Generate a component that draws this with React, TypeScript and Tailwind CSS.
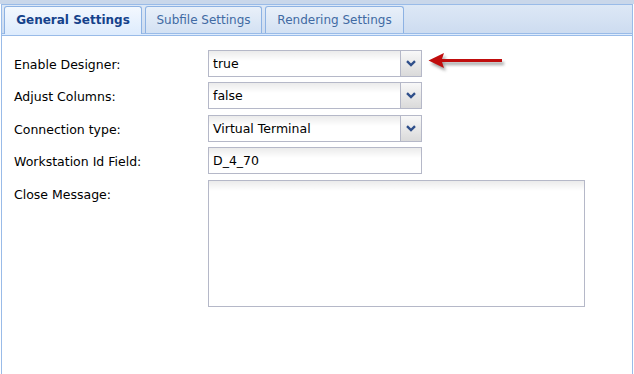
import React from "react";

const FONT = { fontFamily: '"DejaVu Sans", Verdana, sans-serif' };

function Chevron() {
  return (
    <svg width="10" height="7" viewBox="0 0 10 7" className="block">
      <polyline points="1,1.2 5,5 9,1.2" fill="none" stroke="#2f4f8a" strokeWidth="2.4" strokeLinejoin="miter" />
    </svg>
  );
}

function Combo({ value }: { value: string }) {
  return (
    <div className="flex h-[27px] w-[214px] border border-[#b5b8c8] bg-white">
      <div className="flex flex-1 items-center bg-linear-to-b from-[#ebebeb] via-white via-[40%] to-white pl-[4px] pt-[2px] text-[12.5px] text-black">
        {value}
      </div>
      <div className="flex w-[21px] items-center justify-center border-l border-[#b5b8c8] bg-linear-to-b from-[#f8f8f8] to-[#dadada]">
        <Chevron />
      </div>
    </div>
  );
}

function TextField({ value }: { value: string }) {
  return (
    <div className="flex h-[27px] w-[214px] items-center border border-[#b5b8c8] bg-linear-to-b from-[#ebebeb] via-white via-[40%] to-white pl-[4px] pt-[2px] text-[12.5px] text-black">
      {value}
    </div>
  );
}

function Label({ children }: { children: React.ReactNode }) {
  return <div className="w-[194px] pt-[1px] text-[12.5px] leading-[17px] text-black">{children}</div>;
}

export default function App() {
  return (
    <div className="relative h-[374px] w-[634px] overflow-hidden bg-white" style={FONT}>
      <div className="h-[4px] bg-[#c9d7ea]" />
      <div className="mx-[1px] flex h-[370px] flex-col border-x border-[#99bbe8]">
        {/* tab strip */}
        <div className="flex h-[29px] items-end gap-[3px] border-t border-[#99bbe8] bg-linear-to-b from-[#dde8f6] to-[#cddcf0] pl-[2px]">
          <div className="relative z-10 -mb-[1px] flex h-[28px] w-[138px] items-center justify-center rounded-t-[3px] border-x border-t border-[#8db2e3] bg-linear-to-b from-[#f3f8fe] to-[#deecfd] pb-[1px] text-[12px] font-bold text-[#15428b]">
            General Settings
          </div>
          <div className="flex h-[27px] w-[117px] items-center justify-center rounded-t-[3px] border-x border-t border-[#8db2e3] bg-linear-to-b from-[#e9f0f9] to-[#d3e1f3] text-[12px] text-[#416aa3]">
            Subfile Settings
          </div>
          <div className="flex h-[27px] w-[139px] items-center justify-center rounded-t-[3px] border-x border-t border-[#8db2e3] bg-linear-to-b from-[#e9f0f9] to-[#d3e1f3] text-[12px] text-[#416aa3]">
            Rendering Settings
          </div>
        </div>
        <div className="h-[3px] border-y border-[#99bbe8] bg-[#deecfd]" />
        {/* form */}
        <div className="flex flex-col pl-[12px] pt-[14px]">
          <div className="flex items-center">
            <Label>Enable Designer:</Label>
            <Combo value="true" />
          </div>
          <div className="mt-[5px] flex items-center">
            <Label>Adjust Columns:</Label>
            <Combo value="false" />
          </div>
          <div className="mt-[6px] flex items-center">
            <Label>Connection type:</Label>
            <Combo value="Virtual Terminal" />
          </div>
          <div className="mt-[5px] flex items-center">
            <Label>Workstation Id Field:</Label>
            <TextField value="D_4_70" />
          </div>
          <div className="mt-[6px] flex items-start">
            <div className="pt-[5px]">
              <Label>Close Message:</Label>
            </div>
            <div className="h-[127px] w-[377px] border border-[#b5b8c8] bg-linear-to-b from-[#ebebeb] via-white via-[8%] to-white" />
          </div>
        </div>
      </div>
      {/* annotation arrow */}
      <svg className="absolute left-[424px] top-[48px]" width="90" height="28" viewBox="424 48 90 28">
        <defs>
          <filter id="sh" x="-20%" y="-50%" width="140%" height="200%">
            <feGaussianBlur stdDeviation="1.6" />
          </filter>
        </defs>
        <g transform="translate(2,3)" filter="url(#sh)" opacity="0.55">
          <polygon points="428.5,60.5 444,53 442,59 502,59 502,62 442,62 444,68" fill="#555" />
        </g>
        <polygon points="428.5,60.5 444,53 442,59 502,59 502,62 442,62 444,68" fill="#c00d0d" />
      </svg>
    </div>
  );
}
